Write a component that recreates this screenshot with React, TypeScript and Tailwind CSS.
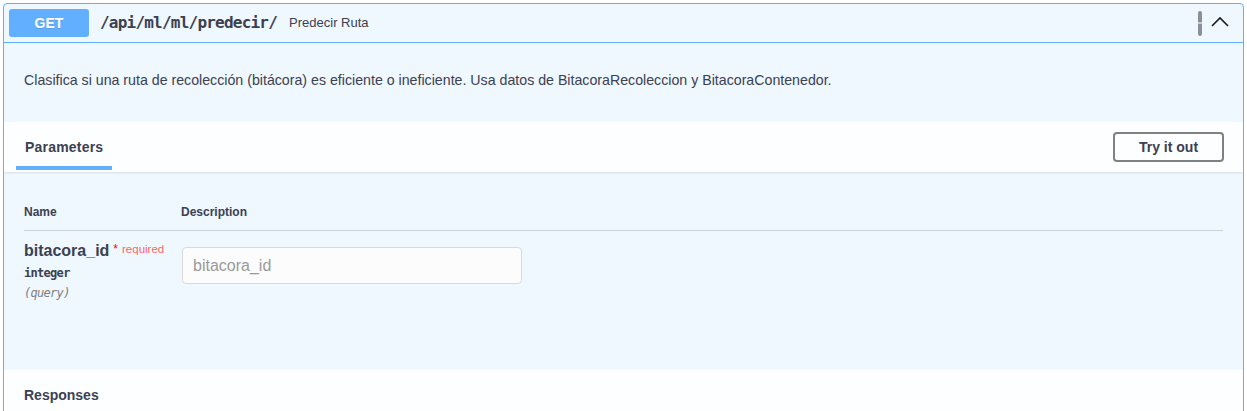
import React from 'react'

const sans = { fontFamily: '"Liberation Sans", Arial, sans-serif' }

function ChevronUp() {
  return (
    <svg width="20" height="20" viewBox="0 0 20 20" className="block">
      <polyline points="2,13 10,5 18,13" fill="none" stroke="#1a1a1a" strokeWidth="1.6" />
    </svg>
  )
}

export default function App() {
  return (
    <div className="bg-white min-h-[411px] pt-[3px] px-[3px] text-[#3b4151] font-['Liberation_Sans',Arial,sans-serif]">
      <div className="border border-[#61affe] rounded-[4px] bg-[#eff7ff] overflow-hidden">
        {/* summary */}
        <div className="flex items-center h-[39px] px-[5px] border-b border-[#61affe]">
          <span className="w-[80px] h-[28px] rounded-[3px] bg-[#61affe] text-white text-[14px] font-bold flex items-center justify-center [text-shadow:0_1px_0_rgba(0,0,0,.1)]">
            GET
          </span>
          <span className="ml-[11px] font-['DejaVu_Sans_Mono',monospace] font-bold text-[16px] tracking-[-0.78px] text-[#3b4151]">
            /api/ml/ml/predecir/
          </span>
          <span className="ml-[12px] text-[13px] text-[#3b4151]">Predecir Ruta</span>
          <div className="ml-auto flex items-center mr-[8px]">
            <div className="w-[4px] h-[25px] rounded-[2px] bg-[#8a8f99] flex items-center justify-center">
              <div className="w-[4px] h-[2px] bg-[#c6cad0]" />
            </div>
            <div className="ml-[8px]">
              <ChevronUp />
            </div>
          </div>
        </div>

        {/* description */}
        <div className="px-[20px] pt-[29px] pb-[34px]">
          <p className="text-[14.2px] leading-[16px]">
            Clasifica si una ruta de recolección (bitácora) es eficiente o ineficiente. Usa datos de BitacoraRecoleccion y BitacoraContenedor.
          </p>
        </div>

        {/* tab header */}
        <div className="h-[50px] bg-[#fcfeff] shadow-[0_1px_2px_rgba(0,0,0,0.1)] flex items-center px-[20px] relative">
          <div className="relative h-full flex items-center">
            <span className="text-[14px] font-bold ml-[1px] tracking-[0.2px]">Parameters</span>
            <div className="absolute left-[-8px] right-[-9px] bottom-[2px] h-[4px] bg-[#61affe]" />
          </div>
          <button className="ml-auto mr-[-1px] w-[111px] h-[30px] border-2 border-[#808080] rounded-[4px] text-[14px] font-bold text-[#3b4151] bg-transparent">
            Try it out
          </button>
        </div>

        {/* parameters */}
        <div className="px-[20px] pt-[33px] h-[198px]">
          <div className="flex border-b border-[#3b4151]/20 pb-[11px] text-[12px] font-bold leading-[14px]">
            <div className="w-[157px]">Name</div>
            <div>Description</div>
          </div>
          <div className="flex">
            <div className="w-[158px] pt-[11px]">
              <div className="flex items-start">
                <span className="text-[16px] font-bold leading-[18px]">bitacora_id</span>
                <span className="text-[#ff0000] text-[12px] ml-[4px] leading-[12px] mt-[1px]">*</span>
                <span className="text-[#ff6666] text-[11.5px] ml-[4px] leading-[12px] mt-[1px]">required</span>
              </div>
              <div className="mt-[6px] font-['DejaVu_Sans_Mono',monospace] text-[12px] font-bold tracking-[-0.7px] leading-[14px]">
                integer
              </div>
              <div className="mt-[6px] font-['DejaVu_Sans_Mono',monospace] text-[12px] italic tracking-[-0.7px] text-[#808080] leading-[14px]">
                (query)
              </div>
            </div>
            <div className="pt-[16px]">
              <input
                placeholder="bitacora_id"
                className="w-[340px] h-[37px] rounded-[4px] border border-[#d9d9d9] bg-[#fcfcfc] px-[10px] text-[16px] placeholder:text-[#9a9a9a] outline-none"
                style={sans}
              />
            </div>
          </div>
        </div>

        {/* responses */}
        <div className="h-[50px] bg-[#fcfeff] flex items-center px-[20px]">
          <span className="text-[14px] font-bold">Responses</span>
        </div>
      </div>
    </div>
  )
}
